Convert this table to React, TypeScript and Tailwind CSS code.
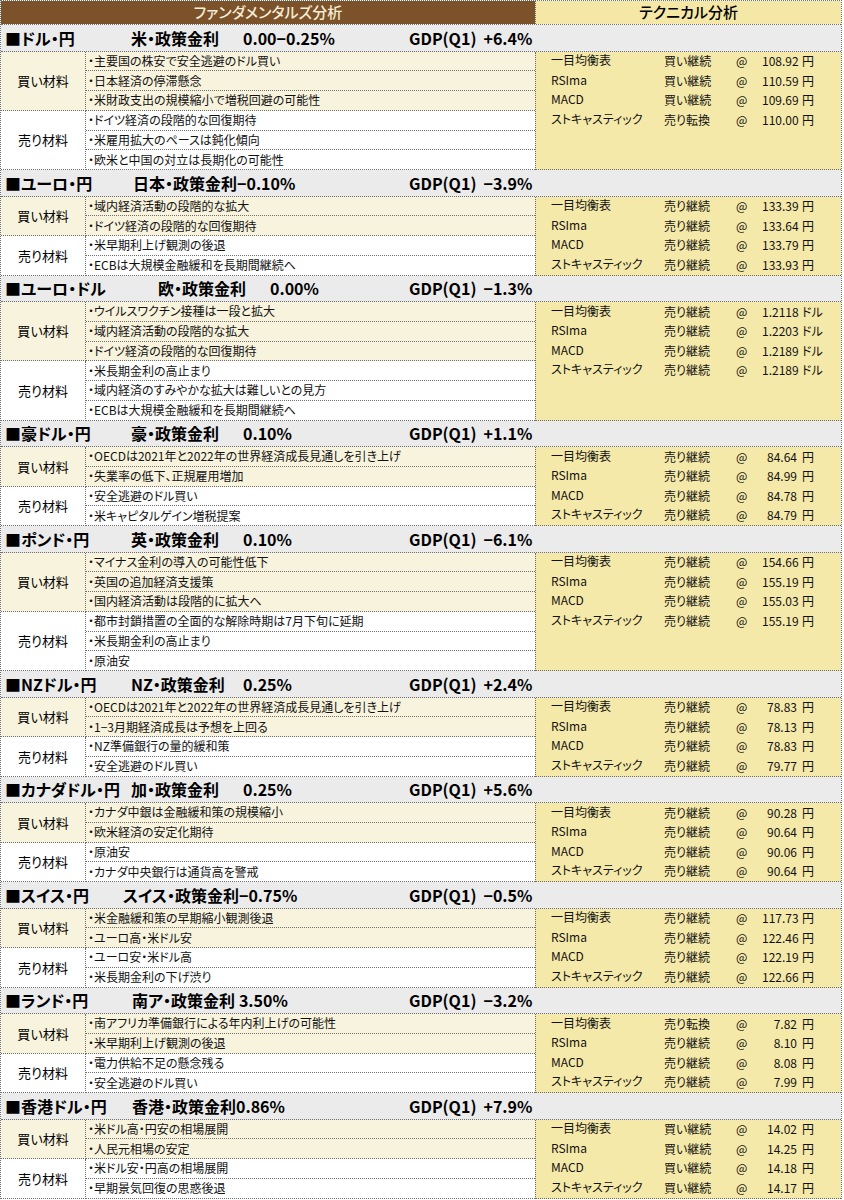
import React from "react";

type Section = {
  cur: string;
  policy: string;
  polCls: string;
  rate: string;
  rateCls: string;
  gdp: string;
  buy: string[];
  sell: string[];
  tech: [string, string][];
  unit: string;
};

const TECH_NAMES = ["一目均衡表", "RSIma", "MACD", "ストキャスティック"];

const SECTIONS: Section[] = [
  {
    cur: "■ドル・円",
    policy: "米・政策金利",
    polCls: "w-[112px]",
    rate: "0.00−0.25%",
    rateCls: "",
    gdp: "+6.4%",
    buy: ["・主要国の株安で安全逃避のドル買い", "・日本経済の停滞懸念", "・米財政支出の規模縮小で増税回避の可能性"],
    sell: ["・ドイツ経済の段階的な回復期待", "・米雇用拡大のペースは鈍化傾向", "・欧米と中国の対立は長期化の可能性"],
    tech: [["買い継続", "108.92"], ["買い継続", "110.59"], ["買い継続", "109.69"], ["売り転換", "110.00"]],
    unit: "円",
  },
  {
    cur: "■ユーロ・円",
    policy: "日本・政策金利",
    polCls: "ml-[2px]",
    rate: "−0.10%",
    rateCls: "",
    gdp: "−3.9%",
    buy: ["・域内経済活動の段階的な拡大", "・ドイツ経済の段階的な回復期待"],
    sell: ["・米早期利上げ観測の後退", "・ECBは大規模金融緩和を長期間継続へ"],
    tech: [["売り継続", "133.39"], ["売り継続", "133.64"], ["売り継続", "133.79"], ["売り継続", "133.93"]],
    unit: "円",
  },
  {
    cur: "■ユーロ・ドル",
    policy: "欧・政策金利",
    polCls: "ml-[27px] w-[112px]",
    rate: "0.00%",
    rateCls: "",
    gdp: "−1.3%",
    buy: ["・ウイルスワクチン接種は一段と拡大", "・域内経済活動の段階的な拡大", "・ドイツ経済の段階的な回復期待"],
    sell: ["・米長期金利の高止まり", "・域内経済のすみやかな拡大は難しいとの見方", "・ECBは大規模金融緩和を長期間継続へ"],
    tech: [["売り継続", "1.2118"], ["売り継続", "1.2203"], ["売り継続", "1.2189"], ["売り継続", "1.2189"]],
    unit: "ドル",
  },
  {
    cur: "■豪ドル・円",
    policy: "豪・政策金利",
    polCls: "w-[112px]",
    rate: "0.10%",
    rateCls: "",
    gdp: "+1.1%",
    buy: ["・OECDは2021年と2022年の世界経済成長見通しを引き上げ", "・失業率の低下、正規雇用増加"],
    sell: ["・安全逃避のドル買い", "・米キャピタルゲイン増税提案"],
    tech: [["売り継続", "84.64"], ["売り継続", "84.99"], ["売り継続", "84.78"], ["売り継続", "84.79"]],
    unit: "円",
  },
  {
    cur: "■ポンド・円",
    policy: "英・政策金利",
    polCls: "w-[112px]",
    rate: "0.10%",
    rateCls: "",
    gdp: "−6.1%",
    buy: ["・マイナス金利の導入の可能性低下", "・英国の追加経済支援策", "・国内経済活動は段階的に拡大へ"],
    sell: ["・都市封鎖措置の全面的な解除時期は7月下旬に延期", "・米長期金利の高止まり", "・原油安"],
    tech: [["売り継続", "154.66"], ["売り継続", "155.19"], ["売り継続", "155.03"], ["売り継続", "155.19"]],
    unit: "円",
  },
  {
    cur: "■NZドル・円",
    policy: "NZ・政策金利",
    polCls: "w-[112px]",
    rate: "0.25%",
    rateCls: "",
    gdp: "+2.4%",
    buy: ["・OECDは2021年と2022年の世界経済成長見通しを引き上げ", "・1−3月期経済成長は予想を上回る"],
    sell: ["・NZ準備銀行の量的緩和策", "・安全逃避のドル買い"],
    tech: [["売り継続", "78.83"], ["売り継続", "78.13"], ["売り継続", "78.83"], ["売り継続", "79.77"]],
    unit: "円",
  },
  {
    cur: "■カナダドル・円",
    policy: "加・政策金利",
    polCls: "w-[112px]",
    rate: "0.25%",
    rateCls: "",
    gdp: "+5.6%",
    buy: ["・カナダ中銀は金融緩和策の規模縮小", "・欧米経済の安定化期待"],
    sell: ["・原油安", "・カナダ中央銀行は通貨高を警戒"],
    tech: [["売り継続", "90.28"], ["売り継続", "90.64"], ["売り継続", "90.06"], ["売り継続", "90.64"]],
    unit: "円",
  },
  {
    cur: "■スイス・円",
    policy: "スイス・政策金利",
    polCls: "-ml-[8px]",
    rate: "−0.75%",
    rateCls: "",
    gdp: "−0.5%",
    buy: ["・米金融緩和策の早期縮小観測後退", "・ユーロ高・米ドル安"],
    sell: ["・ユーロ安・米ドル高", "・米長期金利の下げ渋り"],
    tech: [["売り継続", "117.73"], ["売り継続", "122.46"], ["売り継続", "122.19"], ["売り継続", "122.66"]],
    unit: "円",
  },
  {
    cur: "■ランド・円",
    policy: "南ア・政策金利",
    polCls: "ml-px",
    rate: "3.50%",
    rateCls: "ml-[4px]",
    gdp: "−3.2%",
    buy: ["・南アフリカ準備銀行による年内利上げの可能性", "・米早期利上げ観測の後退"],
    sell: ["・電力供給不足の懸念残る", "・安全逃避のドル買い"],
    tech: [["売り転換", "7.82"], ["売り継続", "8.10"], ["売り継続", "8.08"], ["売り継続", "7.99"]],
    unit: "円",
  },
  {
    cur: "■香港ドル・円",
    policy: "香港・政策金利",
    polCls: "ml-px",
    rate: "0.86%",
    rateCls: "",
    gdp: "+7.9%",
    buy: ["・米ドル高・円安の相場展開", "・人民元相場の安定"],
    sell: ["・米ドル安・円高の相場展開", "・早期景気回復の思惑後退"],
    tech: [["買い継続", "14.02"], ["買い継続", "14.25"], ["買い継続", "14.18"], ["買い継続", "14.17"]],
    unit: "円",
  },
];

function Group({ label, items, bg }: { label: string; items: string[]; bg: string }) {
  return (
    <div className={`flex ${bg}`}>
      <div className="flex w-[85px] shrink-0 items-center justify-center border-r border-b border-dotted border-[#6e6e6e] text-[13px]">
        {label}
      </div>
      <div className="flex flex-1 flex-col">
        {items.map((t) => (
          <div
            key={t}
            className="flex h-[19.75px] items-center border-b border-dotted border-[#6e6e6e] pl-[2px] text-[12px] text-[#111]"
          >
            {t}
          </div>
        ))}
      </div>
    </div>
  );
}

function Block({ s }: { s: Section }) {
  return (
    <div>
      {/* title row */}
      <div className="flex h-[26.5px] items-center border-b border-dotted border-[#6e6e6e] bg-[#ebebeb] text-[16px] text-black">
        <div className="flex w-[408px] shrink-0 items-center pl-1">
          <span className="w-[126px] shrink-0 font-bold">{s.cur}</span>
          <span className={`shrink-0 font-bold ${s.polCls}`}>{s.policy}</span>
          <span className={`font-semibold ${s.rateCls}`}>{s.rate}</span>
        </div>
        <span className="font-semibold">GDP(Q1)</span>
        <span className="ml-[7px] font-semibold">{s.gdp}</span>
      </div>

      <div className="flex">
        <div className="w-[534px] shrink-0">
          <Group label="買い材料" items={s.buy} bg="bg-[#f8f3dd]" />
          <Group label="売り材料" items={s.sell} bg="bg-white" />
        </div>
        <div className="flex flex-1 flex-col border-l border-b border-dotted border-[#6e6e6e] bg-[#f5e9a9] text-[12px] text-[#111]">
          {s.tech.map(([status, price], i) => (
            <div key={i} className="flex h-[19.5px] items-center">
              <span className="w-[128px] shrink-0 -translate-y-[1px] pl-[15px]">{TECH_NAMES[i]}</span>
              <span className="w-[72px] shrink-0">{status}</span>
              <span className="w-[26px] shrink-0">@</span>
              <span className="w-[35px] shrink-0 text-right">{price}</span>
              <span className="ml-[5px]">{s.unit}</span>
            </div>
          ))}
        </div>
      </div>
    </div>
  );
}

export default function App() {
  return (
    <div className="min-h-[1200px] bg-white font-['Noto_Sans_CJK_JP',sans-serif] [font-feature-settings:'palt']">
      <div className="w-[842px] border-x border-t border-dotted border-[#6e6e6e]">
        {/* header */}
        <div className="flex h-[24px] border-b border-dotted border-[#6e6e6e]">
          <div className="flex w-[534px] shrink-0 items-center justify-center bg-[#7b5229] text-[15px] font-medium text-[#f6ecd6]">
            ファンダメンタルズ分析
          </div>
          <div className="flex flex-1 items-center justify-center border-l border-dotted border-[#6e6e6e] bg-[#f5e8a6] text-[15px] font-medium text-black">
            テクニカル分析
          </div>
        </div>
        {SECTIONS.map((s) => (
          <Block key={s.cur} s={s} />
        ))}
      </div>
    </div>
  );
}
